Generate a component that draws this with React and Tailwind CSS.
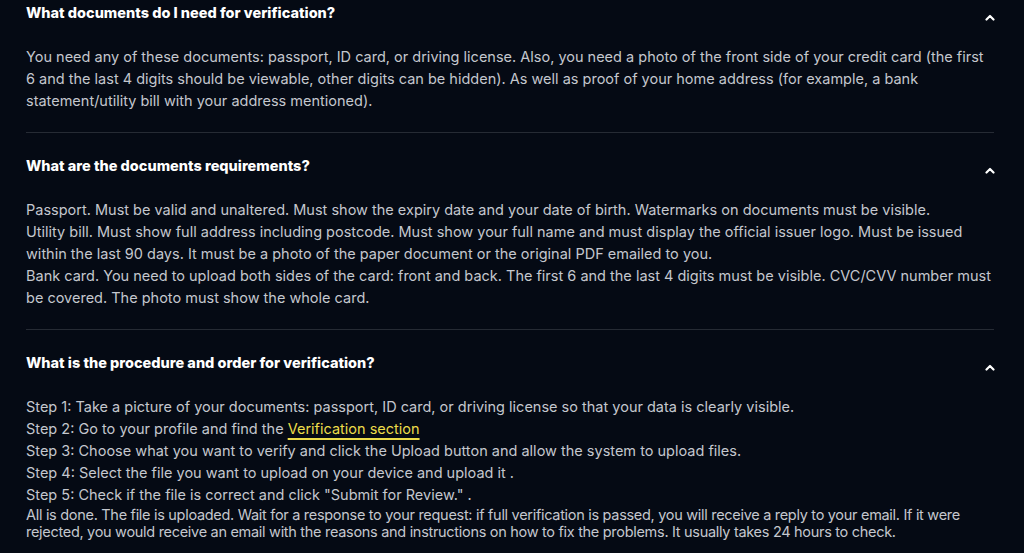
import React from 'react';

const Chevron = () => (
  <svg width="10" height="7" viewBox="0 0 10 7" className="mt-[12px] shrink-0" fill="none">
    <path d="M1.5 5.5L5 2L8.5 5.5" stroke="#ffffff" strokeWidth="2.2" strokeLinecap="round" strokeLinejoin="round" />
  </svg>
);

const FaqItem = ({ question, children, last }) => (
  <div className={last ? 'pb-5' : 'pb-5 border-b border-[#262b34]'}>
    <div className="flex items-start justify-between pt-[22px] -mr-[1px]">
      <h3 className="text-[14.5px] leading-[22px] font-extrabold text-white">{question}</h3>
      <Chevron />
    </div>
    <div className="mt-[22px] text-[14.5px] leading-[22px] text-[#c4c7ce]">{children}</div>
  </div>
);

const App = () => {
  return (
    <div className="min-h-screen bg-[#050a14] overflow-hidden" style={{ fontFamily: 'Inter, "Noto Sans", sans-serif' }}>
      <div className="-mt-5 pl-[26px] pr-[30px]">
        <FaqItem question="What documents do I need for verification?">
          <p>
            You need any of these documents: passport, ID card, or driving license. Also, you need a photo of the front side of your credit card (the first 6 and the last 4 digits should be viewable, other digits can be hidden). As well as proof of your home address (for example, a bank statement/utility bill with your address mentioned).
          </p>
        </FaqItem>
        <FaqItem question="What are the documents requirements?">
          <p>Passport. Must be valid and unaltered. Must show the expiry date and your date of birth. Watermarks on documents must be visible.</p>
          <p>Utility bill. Must show full address including postcode. Must show your full name and must display the official issuer logo. Must be issued within the last 90 days. It must be a photo of the paper document or the original PDF emailed to you.</p>
          <p>Bank card. You need to upload both sides of the card: front and back. The first 6 and the last 4 digits must be visible. CVC/CVV number must be covered. The photo must show the whole card.</p>
        </FaqItem>
        <FaqItem question="What is the procedure and order for verification?" last>
          <p>Step 1: Take a picture of your documents: passport, ID card, or driving license so that your data is clearly visible.</p>
          <p>
            Step 2: Go to your profile and find the{' '}
            <a href="#" className="text-[#ecdc4a] underline decoration-[#ecdc4a] decoration-2 underline-offset-4">Verification section</a>
          </p>
          <p>Step 3: Choose what you want to verify and click the Upload button and allow the system to upload files.</p>
          <p>Step 4: Select the file you want to upload on your device and upload it .</p>
          <p>Step 5: Check if the file is correct and click "Submit for Review." .</p>
          <p className="leading-[17px] tracking-[-0.3px]">
            All is done. The file is uploaded. Wait for a response to your request: if full verification is passed, you will receive a reply to your email. If it were rejected, you would receive an email with the reasons and instructions on how to fix the problems. It usually takes 24 hours to check.
          </p>
        </FaqItem>
      </div>
    </div>
  );
};

export default App;
